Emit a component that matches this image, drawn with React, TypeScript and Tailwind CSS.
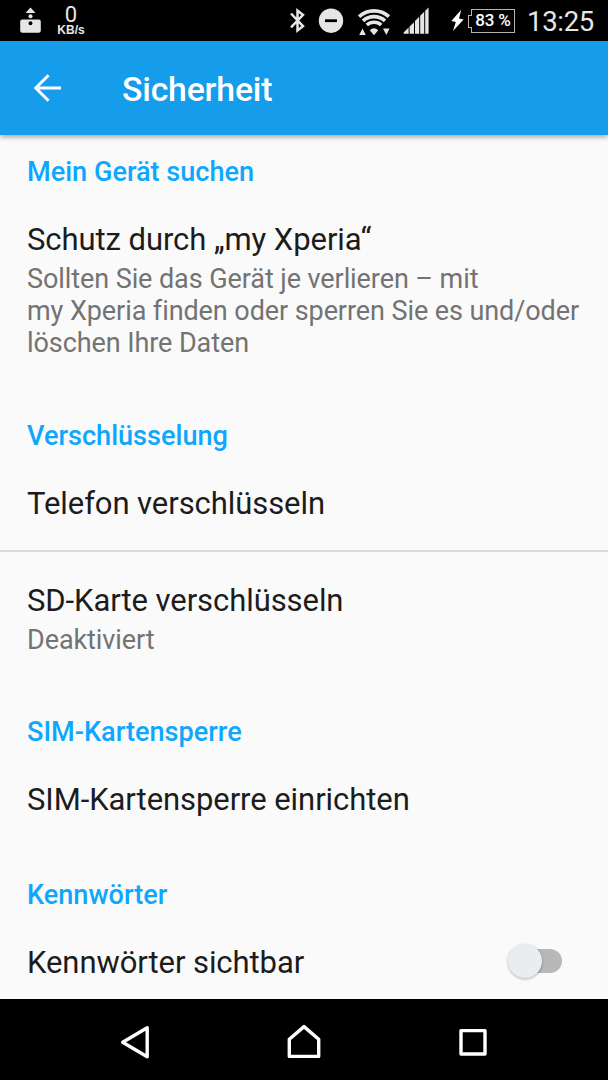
import type { ReactNode } from "react";

function StatusBar() {
  return (
    <div className="flex h-[41px] shrink-0 items-center bg-black text-[#e6e6e6]">
      <svg className="ml-5 h-[41px] w-[22px] shrink-0" viewBox="0 0 22 41" fill="#e6e6e6">
        <path d="M10.5 7.5 15.5 13H5.5Z" />
        <circle cx="10.5" cy="16.3" r="2" />
        <path fillRule="evenodd" d="M2.2 19.5h16.6a2 2 0 0 1 2 2v9.3a2 2 0 0 1-2 2H2.2a2 2 0 0 1-2-2v-9.3a2 2 0 0 1 2-2Zm8.3 1.8a2 2 0 1 0 0 4 2 2 0 0 0 0-4Z" />
      </svg>
      <div className="ml-[14px] flex w-[30px] flex-col items-center">
        <span className="text-[22px] leading-[20px]">0</span>
        <span className="-mt-px font-['Liberation_Sans',sans-serif] text-[12px] leading-[12px] font-bold">KB/s</span>
      </div>
      <svg className="ml-auto h-[41px] w-[20px] shrink-0" viewBox="0 0 20 41" fill="none" stroke="#e6e6e6" strokeWidth="2.5">
        <path d="m3 13.5 12 12.7-5.5 4.3V10.6l5.5 4.3L3 27.3" />
      </svg>
      <svg className="ml-[10px] h-[41px] w-[26px] shrink-0" viewBox="0 0 26 41">
        <circle cx="13" cy="20.7" r="12.2" fill="#e6e6e6" />
        <path d="M7 20.7h12" stroke="#000" strokeWidth="2.8" />
      </svg>
      <svg className="ml-[14px] h-[41px] w-[34px] shrink-0" viewBox="0 0 34 41">
        <g fill="none" stroke="#e6e6e6" strokeWidth="3.6">
          <path d="M1.1 16.6A22.2 22.2 0 0 1 30.9 16.6" />
          <path d="M5 20.8A16.5 16.5 0 0 1 27 20.8" />
          <path d="M8.8 25A10.8 10.8 0 0 1 23.2 25" />
        </g>
        <path d="M11.8 30.2q4.2-4 8.4 0L16 35.3Z" fill="#e6e6e6" />
        <path d="m1.2 35 3.3-6.6L7.8 35ZM25 28.4h6.6L28.3 35Z" fill="#e6e6e6" />
      </svg>
      <svg className="ml-[10px] h-[41px] w-[28px] shrink-0" viewBox="0 0 28 41" fill="#e6e6e6">
        <path d="M1.6 33.8v-1.4l5-4.9v6.3ZM7.6 33.8v-7.3l4.4-4.3v11.6ZM13 33.8V21l4.2-4.2v17ZM18.2 33.8V15.7l4-3.9v22ZM23.2 33.8V10.8l3.4-3.2v26.2Z" />
      </svg>
      <svg className="ml-[20px] h-[41px] w-[15px] shrink-0" viewBox="0 0 15 41" fill="#fff">
        <path d="M11.3 9.7 1.3 21l4.5 1.1L3 31.1 13.6 19.6 9 18.4Z" />
      </svg>
      <div className="relative ml-[6px] flex h-[24px] w-[44px] items-center justify-center border border-[#b5b5b5] text-[17px] font-medium tracking-[-0.2px] text-white">
        <span className="whitespace-nowrap">83 %</span>
        <span className="absolute top-[5px] -left-[4px] h-[13px] w-[4px] border border-r-0 border-[#b5b5b5] bg-black" />
      </div>
      <span className="mr-[12px] ml-[12px] w-[69px] pt-[2px] text-[27.5px] leading-[41px] tracking-[-0.3px] whitespace-nowrap">13:25</span>
    </div>
  );
}

function AppBar({ title }: { title: string }) {
  return (
    <header className="z-10 flex h-[94px] shrink-0 items-center bg-[#159ceb] shadow-[0_2px_5px_rgba(0,0,0,0.35)]">
      <svg className="ml-[33px] h-[30px] w-[30px]" viewBox="0 0 30 30" fill="none" stroke="#fff" strokeWidth="3">
        <path d="M28 15H3M15.5 2.3 2.8 15l12.7 12.7" />
      </svg>
      <h1 className="ml-[59px] pt-[3px] text-[33.8px] leading-[40px] font-medium tracking-[-0.2px] text-white">{title}</h1>
    </header>
  );
}

function SectionTitle({ children }: { children: ReactNode }) {
  return <h2 className="pt-[27px] text-[27.1px] leading-8 font-medium text-[#0ea7fd]">{children}</h2>;
}

interface PreferenceProps {
  title: string;
  summary?: string[];
  className?: string;
  action?: ReactNode;
}

function Preference({ title, summary, className = "pt-[34px] pb-[34px]", action }: PreferenceProps) {
  return (
    <div className={`flex items-center justify-between ${className}`}>
      <div>
        <h3 className="text-[31px] leading-9 tracking-[-0.07px] text-[#1c1c1c]">{title}</h3>
        {summary && (
          <p className="mt-[5px] text-[27px] leading-8 tracking-[-0.08px] whitespace-nowrap text-[#737373]">
            {summary.map((line) => (
              <span key={line} className="block">{line}</span>
            ))}
          </p>
        )}
      </div>
      {action}
    </div>
  );
}

function Switch() {
  return (
    <div className="mr-[19px] mb-[5px] flex h-[24px] w-[54px] items-center">
      <span className="z-10 h-[34px] w-[34px] shrink-0 rounded-full bg-[#eaedef] shadow-[0_1px_3px_rgba(0,0,0,0.3)]" />
      <span className="-ml-[20px] h-[24px] w-[40px] shrink-0 rounded-full bg-[#b8b8b8]" />
    </div>
  );
}

function NavBar() {
  return (
    <nav className="flex h-[81px] shrink-0 items-center bg-black">
      <svg className="ml-[119px] h-[40px] w-[34px]" viewBox="0 0 34 40" fill="none" stroke="#fff" strokeWidth="3.4" strokeLinejoin="round">
        <path d="M28.2 8.2v29L3.7 22.7Z" transform="translate(0 -.5)" />
      </svg>
      <svg className="ml-[131px] h-[40px] w-[40px]" viewBox="0 0 40 40" fill="none" stroke="#fff" strokeWidth="3.4" strokeLinejoin="round">
        <path d="M5.3 36.4V19.3L20 6.6l14.7 12.7v17.1Z" />
      </svg>
      <svg className="ml-[134px] h-[34px] w-[30px]" viewBox="0 0 30 34" fill="none" stroke="#fff" strokeWidth="3.4" strokeLinejoin="round">
        <path d="M3 7.6h24v23.4H3Z" />
      </svg>
    </nav>
  );
}

export default function App() {
  return (
    <div className="flex h-[1080px] w-[608px] flex-col overflow-hidden bg-[#fafafa] font-[Roboto,sans-serif]">
      <StatusBar />
      <AppBar title="Sicherheit" />
      <main className="-mt-[6px] flex-1 overflow-hidden">
        <section className="px-[27px]">
          <SectionTitle>Mein Gerät suchen</SectionTitle>
          <Preference
            title="Schutz durch „my Xperia“"
            summary={[
              "Sollten Sie das Gerät je verlieren – mit",
              "my Xperia finden oder sperren Sie es und/oder",
              "löschen Ihre Daten",
            ]}
          />
        </section>

        <section>
          <div className="px-[27px]">
            <SectionTitle>Verschlüsselung</SectionTitle>
            <Preference title="Telefon verschlüsseln" className="pt-[34px] pb-[28px]" />
          </div>
          <hr className="border-t-2 border-[#dadada]" />
          <div className="px-[27px]">
            <Preference title="SD-Karte verschlüsseln" summary={["Deaktiviert"]} className="pt-[31px] pb-[33px]" />
          </div>
        </section>

        <section className="px-[27px]">
          <SectionTitle>SIM-Kartensperre</SectionTitle>
          <Preference title="SIM-Kartensperre einrichten" />
        </section>

        <section className="px-[27px]">
          <SectionTitle>Kennwörter</SectionTitle>
          <Preference title="Kennwörter sichtbar" action={<Switch />} />
        </section>
      </main>
      <NavBar />
    </div>
  );
}
